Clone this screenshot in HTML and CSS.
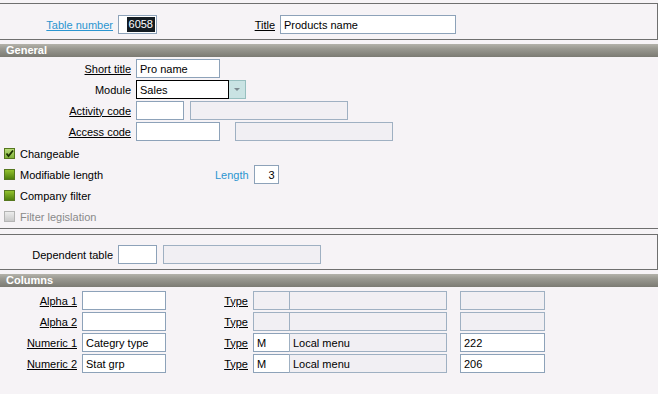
FILE: index.html
```html
<!DOCTYPE html>
<html lang="en">
<head>
  <meta charset="UTF-8">
  <meta name="viewport" content="width=device-width, initial-scale=1.0">
  <title>Table definition</title>
  <link rel="stylesheet" href="styles.css">
</head>
<body>
  <div class="box top-box">
    <div class="row">
      <span class="lbl link u w-table">Table number</span>
      <span class="fld num w-tabnum"><span class="sel">6058</span></span>
      <span class="lbl u w-title">Title</span>
      <span class="fld w-titlefld">Products name</span>
    </div>
  </div>

  <div class="band">General</div>
  <div class="box general">
    <div class="row">
      <span class="lbl u w-gen">Short title</span>
      <span class="fld w-84">Pro name</span>
    </div>
    <div class="row">
      <span class="lbl w-gen">Module</span>
      <span class="fld focus w-module">Sales</span>
      <span class="drop"><span class="arrow"></span></span>
    </div>
    <div class="row">
      <span class="lbl u w-gen">Activity code</span>
      <span class="fld w-48"></span>
      <span class="fld off w-158 gap-6"></span>
    </div>
    <div class="row">
      <span class="lbl u w-gen">Access code</span>
      <span class="fld w-84"></span>
      <span class="fld off w-158 gap-15"></span>
    </div>

    <div class="check-row">
      <span class="cb on">
        <svg width="9" height="9" viewBox="0 0 9 9"><path d="M1.5 4.5 L3.5 7 L8 1.5" fill="none" stroke="#1c3300" stroke-width="1.8"/></svg>
      </span>
      <span class="cb-text">Changeable</span>
    </div>
    <div class="check-row">
      <span class="cb"></span>
      <span class="cb-text w-cbtext">Modifiable length</span>
      <span class="lbl link">Length</span>
      <span class="fld num w-25">3</span>
    </div>
    <div class="check-row">
      <span class="cb"></span>
      <span class="cb-text">Company filter</span>
    </div>
    <div class="check-row">
      <span class="cb dis"></span>
      <span class="cb-text dim">Filter legislation</span>
    </div>
  </div>

  <div class="box dep-box">
    <div class="row">
      <span class="lbl w-dep">Dependent table</span>
      <span class="fld w-39"></span>
      <span class="fld off w-158 gap-6"></span>
    </div>
  </div>

  <div class="band">Columns</div>
  <div class="columns">
    <div class="row">
      <span class="lbl u w-col">Alpha 1</span>
      <span class="fld w-84"></span>
      <span class="lbl u w-type">Type</span>
      <span class="fld off w-37"></span>
      <span class="fld off w-158 join"></span>
      <span class="fld off w-85 gap-13"></span>
    </div>
    <div class="row">
      <span class="lbl u w-col">Alpha 2</span>
      <span class="fld w-84"></span>
      <span class="lbl u w-type">Type</span>
      <span class="fld off w-37"></span>
      <span class="fld off w-158 join"></span>
      <span class="fld off w-85 gap-13"></span>
    </div>
    <div class="row">
      <span class="lbl u w-col">Numeric 1</span>
      <span class="fld w-84">Categry type</span>
      <span class="lbl u w-type">Type</span>
      <span class="fld w-37">M</span>
      <span class="fld off w-158 join">Local menu</span>
      <span class="fld w-85 gap-13">222</span>
    </div>
    <div class="row">
      <span class="lbl u w-col">Numeric 2</span>
      <span class="fld w-84">Stat grp</span>
      <span class="lbl u w-type">Type</span>
      <span class="fld w-37">M</span>
      <span class="fld off w-158 join">Local menu</span>
      <span class="fld w-85 gap-13">206</span>
    </div>
  </div>
</body>
</html>
```

FILE: styles.css
```css
body {
  margin: 0;
  padding-top: 3px;
  background: #f6f3f6;
  font-family: "Liberation Sans", Arial, sans-serif;
  font-size: 11px;
  color: #000;
}
.box {
  border-top: 1px solid #6f6f6f;
  border-bottom: 1px solid #6f6f6f;
  border-right: 1px solid #6f6f6f;
}
.top-box {
  padding: 11px 0 5px;
}
.band {
  margin-top: 4px;
  height: 13px;
  line-height: 13px;
  padding-left: 6px;
  color: #fff;
  font-weight: bold;
  background: linear-gradient(to bottom, #b3b2aa 0%, #9a9991 35%, #7b7a73 100%);
}
.general {
  border-top: none;
  border-right: none;
  padding: 2px 0 1px;
}
.dep-box {
  margin-top: 5px;
  padding: 10px 0 5px;
}
.columns {
  padding-top: 4px;
}
.row {
  display: flex;
  align-items: center;
  height: 19px;
  margin-bottom: 2px;
}
.top-box .row, .dep-box .row {
  margin-bottom: 0;
}
.lbl {
  box-sizing: border-box;
  text-align: right;
  padding-right: 5px;
  white-space: nowrap;
}
.u {
  text-decoration: underline;
}
.link {
  color: #2b95d0;
}
.fld {
  box-sizing: border-box;
  display: flex;
  align-items: center;
  height: 19px;
  padding: 0 3px;
  border: 1px solid #8da2b9;
  background: #fff;
  white-space: nowrap;
}
.fld.off {
  background: #f1eff3;
  border-color: #9fb0c2;
}
.fld.focus {
  border-color: #000;
}
.fld.num {
  justify-content: flex-end;
}
.w-tabnum {
  padding-right: 1px;
}
.sel {
  background: #141c22;
  color: #fff;
  line-height: 15px;
  padding: 0 2px;
}
.drop {
  box-sizing: border-box;
  width: 17px;
  height: 19px;
  display: flex;
  align-items: center;
  justify-content: center;
  background: #c9e3e3;
  border: 1px solid #97bfbf;
  border-left: none;
}
.arrow {
  width: 0;
  height: 0;
  border-left: 3px solid transparent;
  border-right: 3px solid transparent;
  border-top: 3px solid #7d8a90;
}

/* label columns */
.w-table { width: 118px; }
.w-title { width: 123px; }
.w-gen { width: 136px; }
.w-dep { width: 118px; }
.w-col { width: 82px; }
.w-type { width: 87px; }

/* field widths */
.w-tabnum { width: 39px; }
.w-titlefld { width: 176px; }
.w-module { width: 93px; }
.w-25 { width: 25px; }
.w-37 { width: 37px; }
.w-39 { width: 39px; }
.w-48 { width: 48px; }
.w-84 { width: 84px; }
.w-85 { width: 85px; }
.w-158 { width: 158px; }
.gap-6 { margin-left: 6px; }
.gap-13 { margin-left: 13px; }
.gap-15 { margin-left: 15px; }
.join { margin-left: -1px; }

/* check boxes */
.check-row {
  display: flex;
  align-items: center;
  height: 21px;
  padding-left: 4px;
}
.cb {
  box-sizing: border-box;
  width: 11px;
  height: 11px;
  display: flex;
  align-items: center;
  justify-content: center;
  border: 1px solid #56771e;
  background: linear-gradient(to bottom, #93c22e, #4f7f0c);
}
.cb.on {
  background: linear-gradient(to bottom, #b8dc78, #7fb03a);
}
.cb.dis {
  border-color: #b4b4b4;
  background: linear-gradient(to bottom, #ececec, #c9c9c9);
}
.cb-text {
  margin-left: 5px;
}
.w-cbtext {
  width: 195px;
}
.dim {
  color: #8a8a8a;
}
```
